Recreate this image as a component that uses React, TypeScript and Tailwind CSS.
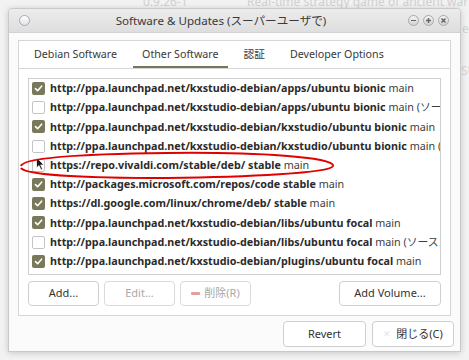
import React from "react";

const rows: { url: string; checked: boolean; extra?: string; cursor?: boolean }[] = [
  { url: "http://ppa.launchpad.net/kxstudio-debian/apps/ubuntu bionic", checked: true },
  { url: "http://ppa.launchpad.net/kxstudio-debian/apps/ubuntu bionic", checked: false, extra: " (ソースコード)" },
  { url: "http://ppa.launchpad.net/kxstudio-debian/kxstudio/ubuntu bionic", checked: true },
  { url: "http://ppa.launchpad.net/kxstudio-debian/kxstudio/ubuntu bionic", checked: false, extra: " (ソースコード)" },
  { url: "https://repo.vivaldi.com/stable/deb/ stable", checked: false, cursor: true },
  { url: "http://packages.microsoft.com/repos/code stable", checked: true },
  { url: "https://dl.google.com/linux/chrome/deb/ stable", checked: true },
  { url: "http://ppa.launchpad.net/kxstudio-debian/libs/ubuntu focal", checked: true },
  { url: "http://ppa.launchpad.net/kxstudio-debian/libs/ubuntu focal", checked: false, extra: " (ソースコード)" },
  { url: "http://ppa.launchpad.net/kxstudio-debian/plugins/ubuntu focal", checked: true },
];

function Check({ checked }: { checked: boolean }) {
  if (checked)
    return (
      <div className="w-[13px] h-[13px] rounded-[2px] bg-[#7a785b] flex items-center justify-center shrink-0">
        <svg width="9" height="9" viewBox="0 0 9 9">
          <path d="M1.5 4.6 L3.6 6.7 L7.6 2.2" fill="none" stroke="#ffffff" strokeWidth="1.6" strokeLinecap="round" strokeLinejoin="round" />
        </svg>
      </div>
    );
  return <div className="w-[13px] h-[13px] rounded-[2px] bg-white border border-[#c4c4c4] shrink-0" />;
}

function Circle({ children }: { children?: React.ReactNode }) {
  return (
    <div className="w-[11px] h-[11px] rounded-full border border-[#a9a9a9] bg-gradient-to-b from-[#f4f4f4] to-[#d2d2d2] flex items-center justify-center">
      {children}
    </div>
  );
}

export default function App() {
  const font = { fontFamily: '"Noto Sans", "Noto Sans CJK JP", sans-serif' };
  return (
    <div className="relative w-[469px] h-[360px] bg-[#f2f2f2] overflow-hidden text-[#333]" style={font}>
      {/* background desktop text */}
      <div className="absolute left-[143px] top-[-7px] text-[12px] text-[#d0d0d0] whitespace-nowrap">0.9.26-1</div>
      <div className="absolute left-[247px] top-[-7px] text-[12px] text-[#d0d0d0] whitespace-nowrap">Real-time strategy game of ancient warfare</div>
      <div className="absolute left-[462px] top-[20px] text-[12px] text-[#d2d2d2]">e</div>
      <div className="absolute left-[461px] top-[62px] text-[12px] text-[#d6d6d6]">SU</div>

      {/* window */}
      <div className="absolute left-[8px] top-[8px] w-[453px] h-[344px] bg-[#fbfbfb] border border-[#c9c9c9] rounded-t-[4px] shadow-[0_1px_6px_rgba(0,0,0,0.18)] flex flex-col">
        {/* title bar */}
        <div className="h-[24px] shrink-0 rounded-t-[4px] bg-gradient-to-b from-[#ececec] to-[#dedede] border-b border-[#d2d2d2] flex items-center px-[10px]">
          <div className="w-[11px] h-[11px] rounded-full border border-[#a8a8b0] bg-gradient-to-b from-[#ffffff] to-[#dfe3ea]" />
          <div className="flex-1 text-center text-[11.6px] text-[#3a3a3a] leading-none pl-[4px]">Software &amp; Updates (スーパーユーザで)</div>
          <div className="flex gap-[4px] mr-[1px]">
            <Circle>
              <div className="w-[5px] h-[1.5px] bg-[#666]" />
            </Circle>
            <Circle>
              <svg width="7" height="7" viewBox="0 0 7 7"><path d="M3.5 1 V6 M1 3.5 H6" stroke="#666" strokeWidth="1.5" /></svg>
            </Circle>
            <Circle>
              <svg width="7" height="7" viewBox="0 0 7 7"><path d="M1.5 1.5 L5.5 5.5 M5.5 1.5 L1.5 5.5" stroke="#666" strokeWidth="1.5" /></svg>
            </Circle>
          </div>
        </div>

        {/* body */}
        <div className="flex-1 flex flex-col px-[9px] pt-[7px] pb-[4px]">
          {/* notebook */}
          <div className="h-[276px] border border-[#d6d6d6] bg-white flex flex-col">
            <div className="h-[28px] shrink-0 border-b border-[#d6d6d6] flex items-stretch text-[10.7px] text-[#3a3a3a] pl-[6px] pb-[1px]">
              <div className="px-[9px] flex items-center">Debian Software</div>
              <div className="px-[9px] ml-[7px] flex items-center border-b-[2px] border-[#77765a] pt-[2px] mb-[-1px]">Other Software</div>
              <div className="px-[9px] ml-[7px] flex items-center">認証</div>
              <div className="px-[9px] ml-[7px] flex items-center">Developer Options</div>
            </div>
            <div className="flex-1 flex flex-col px-[9px] pt-[9px]">
              <div className="relative h-[197px] border border-[#cfcfcf] bg-white overflow-hidden">
                <div className="flex flex-col">
                  {rows.map((r, i) => (
                    <div key={i} className="h-[19.2px] flex items-center pl-[3px] whitespace-nowrap text-[10.75px] leading-none">
                      <div className="relative">
                        <Check checked={r.checked} />
                        {r.cursor && (
                          <svg className="absolute left-[4px] top-[-2px]" width="9" height="14" viewBox="0 0 9 14">
                            <path d="M0.5 0.5 L0.5 11 L3 8.6 L5 13 L6.6 12.3 L4.7 8 L8 8 Z" fill="#1a1a1a" stroke="#ffffff" strokeWidth="0.8" />
                          </svg>
                        )}
                      </div>
                      <span className="ml-[5px] font-bold text-[#2b2b2b]">{r.url}</span>
                      <span className="text-[#3d3d3d]">&nbsp;main{r.extra ?? ""}</span>
                    </div>
                  ))}
                </div>
              </div>
              <div className="flex mt-[6px] gap-[5px] text-[11px]">
                <div className="w-[71px] h-[25px] rounded-[4px] border border-[#cfcfcf] bg-white flex items-center justify-center text-[#333]">Add...</div>
                <div className="w-[71px] h-[25px] rounded-[4px] border border-[#dadada] bg-white flex items-center justify-center text-[#a8a8a8]">Edit...</div>
                <div className="w-[71px] h-[25px] rounded-[4px] border border-[#dadada] bg-white flex items-center justify-center text-[#a8a8a8] gap-[4px]">
                  <div className="w-[9px] h-[3px] rounded-[1px] bg-[#e0a0a0]" />
                  <span>削除(R)</span>
                </div>
                <div className="flex-1" />
                <div className="w-[102px] h-[25px] rounded-[4px] border border-[#cfcfcf] bg-white flex items-center justify-center text-[#333]">Add Volume...</div>
              </div>
            </div>
          </div>
          <div className="flex justify-end gap-[6px] mt-[5px] mr-[-3px] text-[11px]">
            <div className="w-[83px] h-[26px] rounded-[4px] border border-[#cfcfcf] bg-white flex items-center justify-center text-[#333]">Revert</div>
            <div className="w-[82px] h-[26px] rounded-[4px] border border-[#cfcfcf] bg-white flex items-center justify-center text-[#333] gap-[5px]">
              <span className="text-[#e6e6e6] text-[9px]">✕</span>
              <span>閉じる(C)</span>
            </div>
          </div>
        </div>

        {/* red annotation ellipse */}
        <svg className="absolute left-[8px] top-[139px]" width="320" height="36" viewBox="0 0 320 36">
          <path d="M4 18 C 6 10, 60 6, 150 5 C 240 4, 318 9, 316 18 C 314 25, 230 29, 150 30 C 70 30, 8 27, 4 20" fill="none" stroke="#e00000" strokeWidth="2" />
        </svg>
      </div>
    </div>
  );
}
